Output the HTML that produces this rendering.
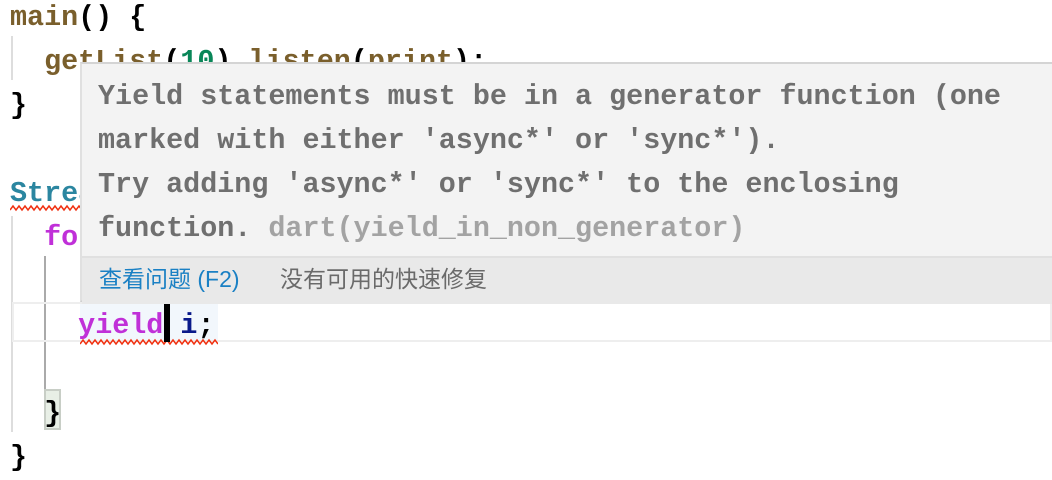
<!DOCTYPE html>
<html><head><meta charset="utf-8"><style>
body{margin:0;width:1052px;height:480px;background:#fff;position:relative;overflow:hidden}
.c{position:absolute;font-family:"Liberation Mono",monospace;font-weight:bold;font-size:28.4px;line-height:44px;white-space:pre;color:#000}
.fn{color:#7a5f2c}.num{color:#098658}.ty{color:#2b86a0}.kw{color:#c030d8}.v{color:#0a1a8a}
.g{position:absolute;width:2px}
.sq{position:absolute;height:6px;background:url("data:image/svg+xml;utf8,");}
#tip{position:absolute;left:80px;top:62px;width:980px;height:240px;background:#f3f3f3;border-top:2px solid #d4d4d4;border-bottom:2px solid #d0d0d0;border-left:2px solid #e0e0e0;box-sizing:border-box}
#tip .t{position:absolute;left:16px;top:11px;font-family:"Liberation Mono",monospace;font-weight:bold;font-size:28.4px;line-height:44px;white-space:pre;color:#6f6f6f}
#bar{position:absolute;left:0;top:192px;right:0;height:46px;background:#e9e9e9;border-top:2px solid #e0e0e0;font-family:"Liberation Sans","Noto Sans CJK SC",sans-serif;font-size:23px;line-height:42px}
</style></head><body>
<div class="g" style="left:11px;top:36px;height:44px;background:#ddd"></div>
<div class="g" style="left:11px;top:216px;height:216px;background:#ddd"></div>
<div class="g" style="left:44px;top:256px;height:134px;background:#aaa"></div>
<div style="position:absolute;left:12px;top:302px;width:1040px;height:40px;border:2px solid #eeeeee;border-left:2px solid #eee;box-sizing:border-box"></div>
<div style="position:absolute;left:80px;top:304px;width:138px;height:36px;background:#f2f7fc"></div>
<div style="position:absolute;left:44px;top:389px;width:17px;height:41px;background:#e8efe6;border:2px solid #c8cec6;box-sizing:border-box"></div>
<div class="c" style="left:10px;top:-4px"><span class="fn">main</span>() {</div>
<div class="c" style="left:10px;top:40px">  <span class="fn">getList</span>(<span class="num">10</span>).<span class="fn">listen</span>(<span class="fn">print</span>);</div>
<div class="c" style="left:10px;top:84px">}</div>
<div class="c" style="left:10px;top:172px"><span class="ty">Stream</span></div>
<div class="c" style="left:10px;top:216px">  <span class="kw">for</span></div>
<div class="c" style="left:10px;top:304px">    <span class="kw">yield</span> <span class="v">i</span>;</div>
<div class="c" style="left:10px;top:392px">  }</div>
<div class="c" style="left:10px;top:436px">}</div>
<svg style="position:absolute;left:10px;top:204px" width="80" height="8"><path d="M0 6 l3 -4 l3 4 l3 -4 l3 4 l3 -4 l3 4 l3 -4 l3 4 l3 -4 l3 4 l3 -4 l3 4 l3 -4 l3 4 l3 -4 l3 4 l3 -4 l3 4 l3 -4 l3 4 l3 -4 l3 4 l3 -4 l3 4 l3 -4 l3 4" stroke="#f03010" fill="none" stroke-width="1.5"/></svg>
<svg style="position:absolute;left:80px;top:338px" width="138" height="8"><path d="M0 6 l3 -4 l3 4 l3 -4 l3 4 l3 -4 l3 4 l3 -4 l3 4 l3 -4 l3 4 l3 -4 l3 4 l3 -4 l3 4 l3 -4 l3 4 l3 -4 l3 4 l3 -4 l3 4 l3 -4 l3 4 l3 -4 l3 4 l3 -4 l3 4 l3 -4 l3 4 l3 -4 l3 4 l3 -4 l3 4 l3 -4 l3 4 l3 -4 l3 4 l3 -4 l3 4 l3 -4 l3 4 l3 -4 l3 4 l3 -4 l3 4 l3 -4 l3 4" stroke="#f03010" fill="none" stroke-width="1.5"/></svg>
<div style="position:absolute;left:164px;top:304px;width:6px;height:38px;background:#000"></div>
<div id="tip">
<div class="t">Yield statements must be in a generator function (one
marked with either 'async*' or 'sync*').
Try adding 'async*' or 'sync*' to the enclosing
function. <span style="color:#a3a3a3">dart(yield_in_non_generator)</span></div>
<div id="bar"><span style="position:absolute;left:17px;color:#1a80c4">查看问题 (F2)</span><span style="position:absolute;left:198px;color:#6a6a6a">没有可用的快速修复</span></div>
</div>
</body></html>
